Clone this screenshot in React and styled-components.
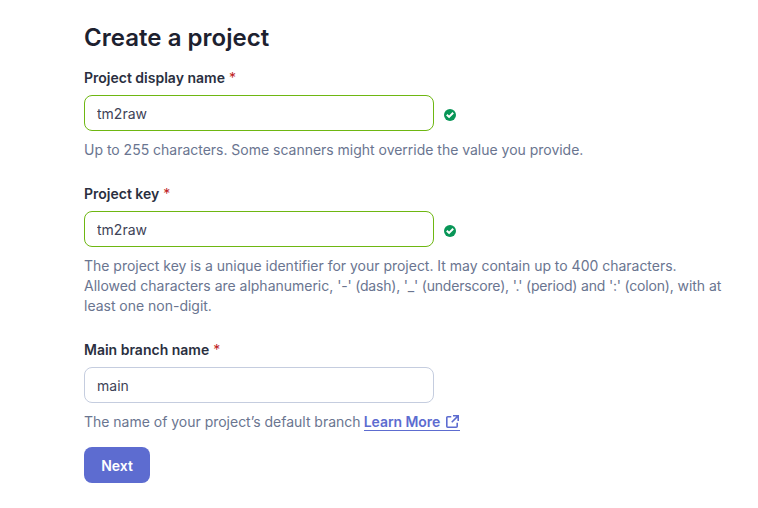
import React from 'react';
import styled, { createGlobalStyle } from 'styled-components';

const GlobalStyle = createGlobalStyle`
  * { box-sizing: border-box; }
  body { margin: 0; background: #fff; font-family: Inter, sans-serif; font-size: 14px; line-height: 20px; color: rgb(62, 67, 87); }
`;
const Page = styled.main`
  display: flex; flex-direction: column; align-items: flex-start;
  width: 758px; height: 508px; padding: 22px 20px 0 84px; overflow: hidden;
`;
const Title = styled.h1`
  margin: 0 0 14px; font-size: 24px; line-height: 32px; font-weight: 600; letter-spacing: 0.04px; color: rgb(29, 33, 47);
`;
const Field = styled.div`
  display: flex; flex-direction: column; margin-bottom: ${p => p.$gap}px;
`;
const Label = styled.label`
  height: 20px; margin-bottom: 7px; font-weight: 600; color: rgb(42, 47, 64);
`;
const Required = styled.span`
  margin-left: 4px; font-weight: 400; color: rgb(190, 35, 30);
`;
const InputRow = styled.div`
  display: flex; align-items: center; gap: 8px; margin-bottom: 9px;
`;
const Input = styled.input`
  width: 350px; height: 36px; padding: 0 12px; border-radius: 8px; outline: none;
  border: 1px solid ${p => (p.$valid ? 'rgb(110, 183, 18)' : 'rgb(197, 205, 223)')};
  background: #fff; color: rgb(62, 67, 87); font: 400 14px/20px Inter, sans-serif;
`;
const Check = styled.svg`
  width: 16px; height: 16px; margin-top: 3px; fill: rgb(8, 150, 87);
`;
const Tick = styled.path`
  fill: none; stroke: #fff; stroke-width: 2;
`;
const Note = styled.div`
  width: 645px; color: rgb(106, 117, 144); letter-spacing: -0.015px;
`;
const Tight = styled.span`
  letter-spacing: -0.19px;
`;
const Link = styled.a`
  display: inline-flex; align-items: center; height: 17px; color: rgb(93, 108, 208); vertical-align: top;
  margin: 2px 0 0 -0.7px; line-height: 16px; letter-spacing: -0.08px;
  font-weight: 600; text-decoration: none; border-bottom: 1px solid currentColor;
`;
const LinkIcon = styled.svg`
  width: 16px; height: 16px; margin-left: 4px; fill: currentColor;
`;
const Button = styled.button`
  width: 66px; height: 36px; padding: 1px 0 0; border: 0; border-radius: 8px;
  background: rgb(93, 108, 208); color: #fff; font: 600 14px/20px Inter, sans-serif;
`;

function FormField({ id, label, value, valid, gap, children }) {
  return (
    <Field $gap={gap}>
      <Label htmlFor={id}>{label}<Required>*</Required></Label>
      <InputRow>
        <Input id={id} defaultValue={value} $valid={valid} />
        {valid && (
          <Check viewBox="0 0 16 16">
            <circle cx="8" cy="8" r="6" />
            <Tick d="m4.8 7.7 2.3 2.2 4.1-4.1" />
          </Check>
        )}
      </InputRow>
      <Note>{children}</Note>
    </Field>
  );
}

export default function App() {
  return (
    <>
      <GlobalStyle />
      <Page>
        <Title>Create a project</Title>
        <FormField id="name" label="Project display name" value="tm2raw" valid gap={24}>
          Up to 255 characters. Some scanners might override the value you provide.
        </FormField>
        <FormField id="key" label="Project key" value="tm2raw" valid gap={24}>
          The project key is a unique identifier for your project. It may contain up to 400 characters. Allowed
          characters are alphanumeric,{' '}
          <Tight>'-' (dash), '_' (underscore), '.' (period) and ':' (colon),</Tight> with at least one non-digit.
        </FormField>
        <FormField id="branch" label="Main branch name" value="main" gap={15}>
          The name of your project’s default branch{' '}
          <Link href="#">
            Learn More
            <LinkIcon viewBox="0 0 16 16">
              <path d="M3.75 2h3.5v1.6H3.6v8.8h8.8V8.75H14v3.5A1.75 1.75 0 0 1 12.25 14h-8.5A1.75 1.75 0 0 1 2 12.25v-8.5C2 2.78 2.78 2 3.75 2ZM9 1h6v6h-1.6V3.7l-5.1 5.1-1.1-1.1 5.1-5.1H9Z" />
            </LinkIcon>
          </Link>
        </FormField>
        <Button type="button">Next</Button>
      </Page>
    </>
  );
}
